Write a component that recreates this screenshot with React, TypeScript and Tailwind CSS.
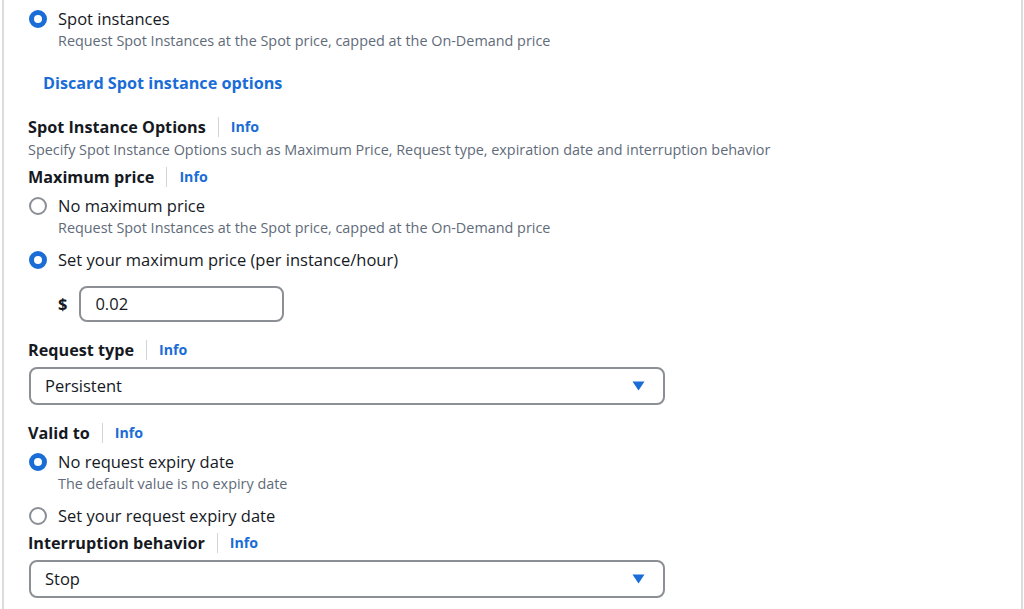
const blue = "text-[#1a6cd6]";

function Radio({ checked }: { checked?: boolean }) {
  return checked ? (
    <span className="w-[18px] h-[18px] rounded-full border-[5px] border-[#1a6cd6] bg-white shrink-0" />
  ) : (
    <span className="w-[18px] h-[18px] rounded-full border-2 border-[#8a8f96] bg-white shrink-0" />
  );
}

function RadioRow({
  label,
  desc,
  checked,
  className = "",
}: {
  label: string;
  desc?: string;
  checked?: boolean;
  className?: string;
}) {
  return (
    <div className={className}>
      <div className="flex items-center gap-[11px] pl-[25px] h-[22px]">
        <Radio checked={checked} />
        <span className="text-[16.5px] text-[#16191f] leading-[22px]">{label}</span>
      </div>
      {desc && (
        <p className="pl-[54px] text-[14.4px] leading-[22px] text-[#5f6b7a]">{desc}</p>
      )}
    </div>
  );
}

function FieldLabel({ label, className = "" }: { label: string; className?: string }) {
  return (
    <div className={`flex items-center h-[24px] pl-[24px] ${className}`}>
      <span className="text-[16.2px] font-bold text-[#16191f]">{label}</span>
      <span className="mx-[12px] w-px h-[20px] bg-[#d1d5db]" />
      <span className={`text-[14.2px] font-bold ${blue}`}>Info</span>
    </div>
  );
}

function Select({ value, className = "" }: { value: string; className?: string }) {
  return (
    <div
      className={`ml-[25px] w-[636px] h-[38px] rounded-lg border-2 border-[#8c8f94] flex items-center justify-between pl-[14px] pr-[18px] ${className}`}
    >
      <span className="text-[16.5px] text-[#16191f]">{value}</span>
      <svg width="13" height="10" viewBox="0 0 13 10">
        <path d="M0.5 0.5 H12.5 L6.5 9.5 Z" fill="#1a6cd6" />
      </svg>
    </div>
  );
}

export default function App() {
  return (
    <div
      className="h-[609px] w-[1024px] overflow-hidden bg-white"
      style={{ fontFamily: '"Open Sans", "Liberation Sans", sans-serif' }}
    >
      <div className="h-full ml-[2px] mr-[1px] w-[1021px] border-l-2 border-r-2 border-[#dcdcdc] pt-[8px]">
        <RadioRow
          checked
          label="Spot instances"
          desc="Request Spot Instances at the Spot price, capped at the On-Demand price"
        />

        <div className={`mt-[19px] pl-[39px] h-[24px] leading-[24px] text-[16.2px] font-bold ${blue}`}>
          Discard Spot instance options
        </div>

        <FieldLabel label="Spot Instance Options" className="mt-[20px]" />
        <p className="pl-[24px] text-[14.4px] leading-[22px] text-[#5f6b7a]">
          Specify Spot Instance Options such as Maximum Price, Request type, expiration date and interruption behavior
        </p>

        <FieldLabel label="Maximum price" className="mt-[4px]" />
        <RadioRow
          className="mt-[6px]"
          label="No maximum price"
          desc="Request Spot Instances at the Spot price, capped at the On-Demand price"
        />
        <RadioRow className="mt-[10px]" checked label="Set your maximum price (per instance/hour)" />

        <div className="mt-[15px] flex items-center pl-[54px] gap-[12px]">
          <span className="text-[16.5px] font-bold text-[#16191f]">$</span>
          <div className="w-[205px] h-[36px] rounded-lg border-2 border-[#8c8f94] flex items-center pl-[14px]">
            <span className="text-[16.5px] text-[#16191f]">0.02</span>
          </div>
        </div>

        <FieldLabel label="Request type" className="mt-[16px]" />
        <Select value="Persistent" className="mt-[5px]" />

        <FieldLabel label="Valid to" className="mt-[16px]" />
        <RadioRow
          className="mt-[6px]"
          checked
          label="No request expiry date"
          desc="The default value is no expiry date"
        />
        <RadioRow className="mt-[10px]" label="Set your request expiry date" />

        <FieldLabel label="Interruption behavior" className="mt-[4px]" />
        <Select value="Stop" className="mt-[5px]" />
      </div>
    </div>
  );
}
